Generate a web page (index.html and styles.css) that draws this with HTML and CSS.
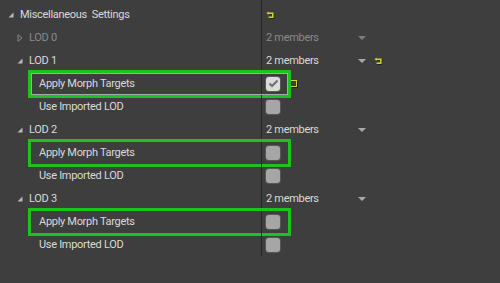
FILE: index.html
```html
<!DOCTYPE html>
<html lang="en">
<head>
    <meta charset="UTF-8">
    <title>Details - LOD Settings</title>
    <link rel="stylesheet" href="styles.css">
</head>
<body>
    <div class="details">
        <!-- category header -->
        <div class="row">
            <div class="name depth-0">
                <svg class="arrow" width="6" height="6" viewBox="0 0 6 6"><polygon points="5.5,0.5 5.5,5.5 0.5,5.5" fill="#b9b9b9"/></svg>
                <span>Miscellaneous&nbsp;&nbsp;Settings</span>
            </div>
            <div class="value">
                <svg class="reset" width="9" height="8" viewBox="0 0 9 8"><path d="M2 2.2 H6.8 V6.3 H2.6" fill="none" stroke="#1a1a1a" stroke-width="1.6" transform="translate(0.6,0.6)"/><path d="M2 2.2 H6.8 V6.3 H2.6" fill="none" stroke="#d2d22c" stroke-width="1.6"/><polygon points="0.5,2.2 2.6,0.6 2.6,3.8" fill="#d2d22c"/></svg>
            </div>
        </div>

        <div class="row">
            <div class="name depth-1 dim">
                <svg class="arrow" width="6" height="8" viewBox="0 0 6 8"><polygon points="1,0.8 5,4 1,7.2" fill="none" stroke="#8a8a8a" stroke-width="1"/></svg>
                <span>LOD 0</span>
            </div>
            <div class="value">
                <div class="combo dim"><span>2 members</span><i class="drop"></i></div>
            </div>
        </div>

        <div class="row">
            <div class="name depth-1">
                <svg class="arrow" width="6" height="6" viewBox="0 0 6 6"><polygon points="5.5,0.5 5.5,5.5 0.5,5.5" fill="#b9b9b9"/></svg>
                <span>LOD 1</span>
            </div>
            <div class="value">
                <div class="combo"><span>2 members</span><i class="drop"></i></div>
                <svg class="reset" width="9" height="8" viewBox="0 0 9 8"><path d="M2 2.2 H6.8 V6.3 H2.6" fill="none" stroke="#1a1a1a" stroke-width="1.6" transform="translate(0.6,0.6)"/><path d="M2 2.2 H6.8 V6.3 H2.6" fill="none" stroke="#d2d22c" stroke-width="1.6"/><polygon points="0.5,2.2 2.6,0.6 2.6,3.8" fill="#d2d22c"/></svg>
            </div>
        </div>

        <div class="row marked active">
            <div class="name depth-2">Apply Morph Targets</div>
            <div class="value">
                <span class="check on"><svg width="11" height="9" viewBox="0 0 11 9"><polyline points="1.5,4.5 4,7 9.5,1.5" fill="none" stroke="#6e6e6e" stroke-width="2"/></svg></span>
                <span class="nub"></span>
            </div>
        </div>
        <div class="row">
            <div class="name depth-2">Use Imported LOD</div>
            <div class="value"><span class="check"></span></div>
        </div>

        <div class="row">
            <div class="name depth-1">
                <svg class="arrow" width="6" height="6" viewBox="0 0 6 6"><polygon points="5.5,0.5 5.5,5.5 0.5,5.5" fill="#b9b9b9"/></svg>
                <span>LOD 2</span>
            </div>
            <div class="value">
                <div class="combo"><span>2 members</span><i class="drop"></i></div>
            </div>
        </div>
        <div class="row marked">
            <div class="name depth-2">Apply Morph Targets</div>
            <div class="value"><span class="check"></span></div>
        </div>
        <div class="row">
            <div class="name depth-2">Use Imported LOD</div>
            <div class="value"><span class="check"></span></div>
        </div>

        <div class="row">
            <div class="name depth-1">
                <svg class="arrow" width="6" height="6" viewBox="0 0 6 6"><polygon points="5.5,0.5 5.5,5.5 0.5,5.5" fill="#b9b9b9"/></svg>
                <span>LOD 3</span>
            </div>
            <div class="value">
                <div class="combo"><span>2 members</span><i class="drop"></i></div>
            </div>
        </div>
        <div class="row marked">
            <div class="name depth-2">Apply Morph Targets</div>
            <div class="value"><span class="check"></span></div>
        </div>
        <div class="row">
            <div class="name depth-2">Use Imported LOD</div>
            <div class="value"><span class="check"></span></div>
        </div>
    </div>
</body>
</html>
```

FILE: styles.css
```css
html, body {
    margin: 0;
    padding: 0;
    background-color: #3e3e3e;
}

body {
    font-family: Roboto, "Liberation Sans", sans-serif;
    font-size: 11px;
    letter-spacing: -0.3px;
    color: #dadada;
    width: 500px;
    height: 283px;
    overflow: hidden;
}

.details {
    display: flex;
    flex-direction: column;
}

.row {
    position: relative;
    display: grid;
    grid-template-columns: 262px 1fr;
    height: 23px;
}

.row:first-child {
    height: 26px;
    padding-top: 3px;
    box-sizing: border-box;
}

.row:first-child .name {
    margin-top: -3px;
    padding-top: 3px;
}

.name {
    display: flex;
    align-items: center;
    gap: 5px;
    border-right: 1px solid #272727;
    white-space: nowrap;
}

.depth-0 { padding-left: 8px; gap: 6px; }
.depth-1 { padding-left: 17px; gap: 6px; }
.depth-2 { padding-left: 39px; }

.dim {
    color: #8a8a8a;
}

.arrow {
    flex: none;
}

.value {
    display: flex;
    align-items: center;
    padding-left: 4px;
}

.combo {
    display: flex;
    align-items: center;
    width: 104px;
}

.combo span {
    flex: 1;
}

.drop {
    width: 0;
    height: 0;
    border-left: 4.5px solid transparent;
    border-right: 4.5px solid transparent;
    border-top: 4px solid #a9a9a9;
    margin-right: 4px;
}

.combo.dim .drop {
    border-top-color: #7c7c7c;
}

.reset {
    margin-left: 4px;
    margin-top: 1px;
}

.value > .reset:first-child {
    margin-left: 0;
}

.check {
    display: flex;
    align-items: center;
    justify-content: center;
    width: 14px;
    height: 14px;
    border-radius: 3px;
    background-color: #a6a6a6;
    box-shadow: 0 0 0 1px #575757;
}

.check.on {
    background-color: #dcdcdc;
}

.nub {
    width: 5px;
    height: 5px;
    margin-left: 11px;
    border: 1.5px solid #d2d22c;
    border-left: none;
    box-shadow: 1px 1px 0 #1a1a1a;
}

/* green highlight boxes drawn over the rows */
.marked::after {
    content: "";
    position: absolute;
    left: 28px;
    top: -2px;
    width: 263px;
    height: 28px;
    box-sizing: border-box;
    border: 3px solid #1ec21e;
    pointer-events: none;
}

.active::before {
    content: "";
    position: absolute;
    left: 31px;
    top: 1px;
    width: 257px;
    height: 22px;
    box-sizing: border-box;
    border: 1px solid #a8a8a8;
    pointer-events: none;
}
```
